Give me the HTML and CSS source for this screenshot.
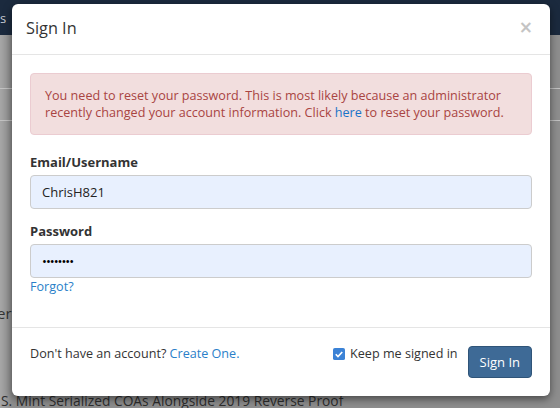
FILE: index.html
```html
<!DOCTYPE html>
<html>
<head>
<meta charset="utf-8">
<link rel="stylesheet" href="styles.css">
</head>
<body>
<div class="page">
  <div class="topbar"><span class="nav-frag">s</span></div>
  <div class="under">
    <div class="under-row r1"></div>
    <div class="under-row r2"></div>
    <div class="under-text">er c</div>
  </div>
  <div class="under-title">S. Mint Serialized COAs Alongside 2019 Reverse Proof</div>

  <div class="modal">
    <div class="modal-header">
      <h4 class="modal-title">Sign In</h4>
      <span class="close">&times;</span>
    </div>
    <div class="modal-body">
      <div class="alert">You need to reset your password. This is most likely because an administrator recently changed your account information. Click <a class="link">here</a> to reset your password.</div>
      <div class="form-group">
        <label class="label">Email/Username</label>
        <div class="input">ChrisH821</div>
      </div>
      <div class="form-group">
        <label class="label">Password</label>
        <div class="input dots">&#8226;&#8226;&#8226;&#8226;&#8226;&#8226;&#8226;&#8226;</div>
        <a class="link forgot">Forgot?</a>
      </div>
    </div>
    <div class="modal-footer">
      <div class="signup">Don't have an account? <a class="link">Create One.</a></div>
      <label class="keep"><span class="check"><svg width="12" height="12" viewBox="0 0 13 13"><rect x="0" y="0" width="13" height="13" rx="2" fill="#3b82d6"/><path d="M3 6.8 L5.4 9.2 L10 4.3" fill="none" stroke="#fff" stroke-width="1.8"/></svg></span>Keep me signed in</label>
      <button class="btn">Sign In</button>
    </div>
  </div>
</div>
</body>
</html>
```

FILE: styles.css
```css
* { box-sizing: border-box; }
html, body { margin: 0; padding: 0; }
body {
  font-family: "Open Sans", "Liberation Sans", sans-serif;
  font-size: 12.6px;
  color: #333;
}
.page {
  position: relative;
  width: 560px;
  height: 408px;
  overflow: hidden;
  background: linear-gradient(to right, #a6a6a6 0px, #8e8e8e 12px);
}
.topbar {
  height: 35px;
  background: #1b2a3e;
  color: #c7ccd3;
  font-size: 13px;
  padding-top: 9px;
}
.nav-frag { margin-left: 0px; }
.under { height: 360px; }
.under-row { height: 1px; background: #c2c2c2; }
.r1 { margin-top: 53px; }
.r2 { margin-top: 31px; }
.under-text {
  margin-top: 182px;
  font-size: 15px;
  color: #333;
  margin-left: -3px;
}
.under-title {
  position: absolute;
  left: 1px;
  top: 391px;
  font-size: 13.8px;
  color: #2e2e2e;
  white-space: nowrap;
}
.modal {
  position: absolute;
  left: 12px;
  top: 4px;
  width: 538px;
  height: 392px;
  background: #fff;
  border-radius: 6px;
  box-shadow: 0 3px 9px rgba(0,0,0,0.5);
  display: flex;
  flex-direction: column;
}
.modal-header {
  height: 51px;
  border-bottom: 1px solid #e5e5e5;
  display: flex;
  align-items: center;
  justify-content: space-between;
  padding: 0 17px 3px 14px;
}
.modal-title {
  margin: 0;
  font-weight: 400;
  font-size: 16.3px;
  color: #333;
}
.close {
  font-size: 17px;
  color: #c4c4c4;
  font-weight: 700;
  line-height: 1;
  font-family: "DejaVu Sans", sans-serif;
}
.modal-body {
  padding: 18px 18px 0 18px;
  flex: 1;
}
.alert {
  background: #f2dede;
  border: 1px solid #ebccd1;
  color: #a94442;
  border-radius: 4px;
  padding: 13px 14px;
  line-height: 17px;
  margin-bottom: 18px;
}
.link { color: #2a7fc9; text-decoration: none; }
.alert .link { color: #1a73c8; }
.form-group { display: flex; flex-direction: column; margin-bottom: 13px; }
.label {
  font-weight: 700;
  font-size: 13px;
  color: #333;
  line-height: 18px;
  margin-bottom: 4px;
}
.input {
  height: 34px;
  border: 1px solid #ccc;
  border-radius: 4px;
  background: #e8f0fe;
  padding: 0 11px;
  display: flex;
  align-items: center;
  color: #222;
  font-size: 13px;
}
.dots { letter-spacing: -1px; font-size: 13px; color: #000; }
.forgot { line-height: 18px; margin-top: 0px; align-self: flex-start; }
.modal-footer {
  border-top: 1px solid #e5e5e5;
  padding: 17px 18px 18px 18px;
  display: flex;
  align-items: flex-start;
}
.signup { line-height: 18px; flex: 1; }
.keep {
  display: flex;
  align-items: center;
  line-height: 18px;
  margin-right: 10px;
}
.check { display: inline-flex; margin-right: 5px; }
.btn {
  font-family: inherit;
  font-size: 13px;
  height: 32px;
  padding: 0 11px;
  background: #3e6a96;
  color: #fff;
  border: 1px solid #2f5478;
  border-radius: 4px;
  margin-top: 1px;
}
```
